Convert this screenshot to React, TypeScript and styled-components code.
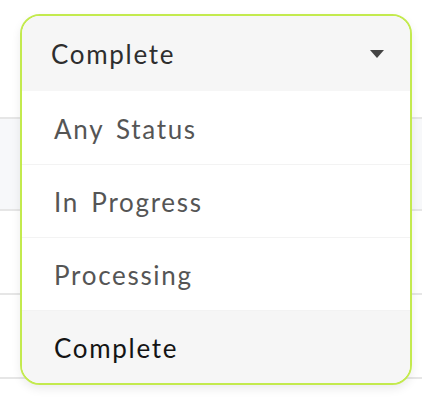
import styled, { createGlobalStyle } from 'styled-components';

const GlobalStyle = createGlobalStyle`
  html, body {
    margin: 0;
    padding: 0;
    background: #ffffff;
  }
  body {
    font-family: Lato, "Noto Sans", sans-serif;
  }
`;

const Page = styled.div`
  position: relative;
  width: 422px;
  height: 402px;
  overflow: hidden;
  background: #ffffff;
`;

const TableRow = styled.div<{ $height: number; $shaded?: boolean }>`
  height: ${(p) => p.$height}px;
  background: ${(p) => (p.$shaded ? '#f7f8fa' : '#ffffff')};
  border-bottom: 2px solid #e6e6e6;
`;

const Menu = styled.div`
  position: absolute;
  left: 20px;
  top: 14px;
  width: 388px;
  border: 2px solid #c3ea4e;
  border-radius: 20px;
  overflow: hidden;
  background: #ffffff;
  box-shadow: 0 4px 10px rgba(0, 0, 0, 0.08);
`;

const Trigger = styled.div`
  height: 75px;
  display: flex;
  align-items: center;
  justify-content: space-between;
  padding: 0 26px 0 29px;
  background: #f6f6f6;
  color: #2e2e2e;
  font-size: 26px;
  letter-spacing: 1.7px;
`;

const Caret = styled.svg`
  width: 14px;
  height: 8px;
  fill: #444444;
`;

const Option = styled.div<{ $selected?: boolean }>`
  height: 73px;
  display: flex;
  align-items: center;
  padding: 2px 0 0 32px;
  box-sizing: border-box;
  font-size: 26px;
  letter-spacing: 1.7px;
  word-spacing: 4px;
  color: ${(p) => (p.$selected ? '#141414' : '#555555')};
  background: ${(p) => (p.$selected ? '#f6f6f6' : '#ffffff')};
  border-top: 1px solid #f3f3f3;

  &:first-of-type {
    border-top: none;
  }
`;

const options = ['Any Status', 'In Progress', 'Processing', 'Complete'];

const App = () => {
  const selected = 'Complete';

  return (
    <Page>
      <GlobalStyle />
      <TableRow $height={117} />
      <TableRow $height={90} $shaded />
      <TableRow $height={82} />
      <TableRow $height={82} />

      <Menu>
        <Trigger>
          {selected}
          <Caret viewBox="0 0 14 8">
            <path d="M0 0 H14 L7 8 Z" />
          </Caret>
        </Trigger>
        <div>
          {options.map((item) => (
            <Option key={item} $selected={item === selected}>
              {item}
            </Option>
          ))}
        </div>
      </Menu>
    </Page>
  );
};

export default App;
